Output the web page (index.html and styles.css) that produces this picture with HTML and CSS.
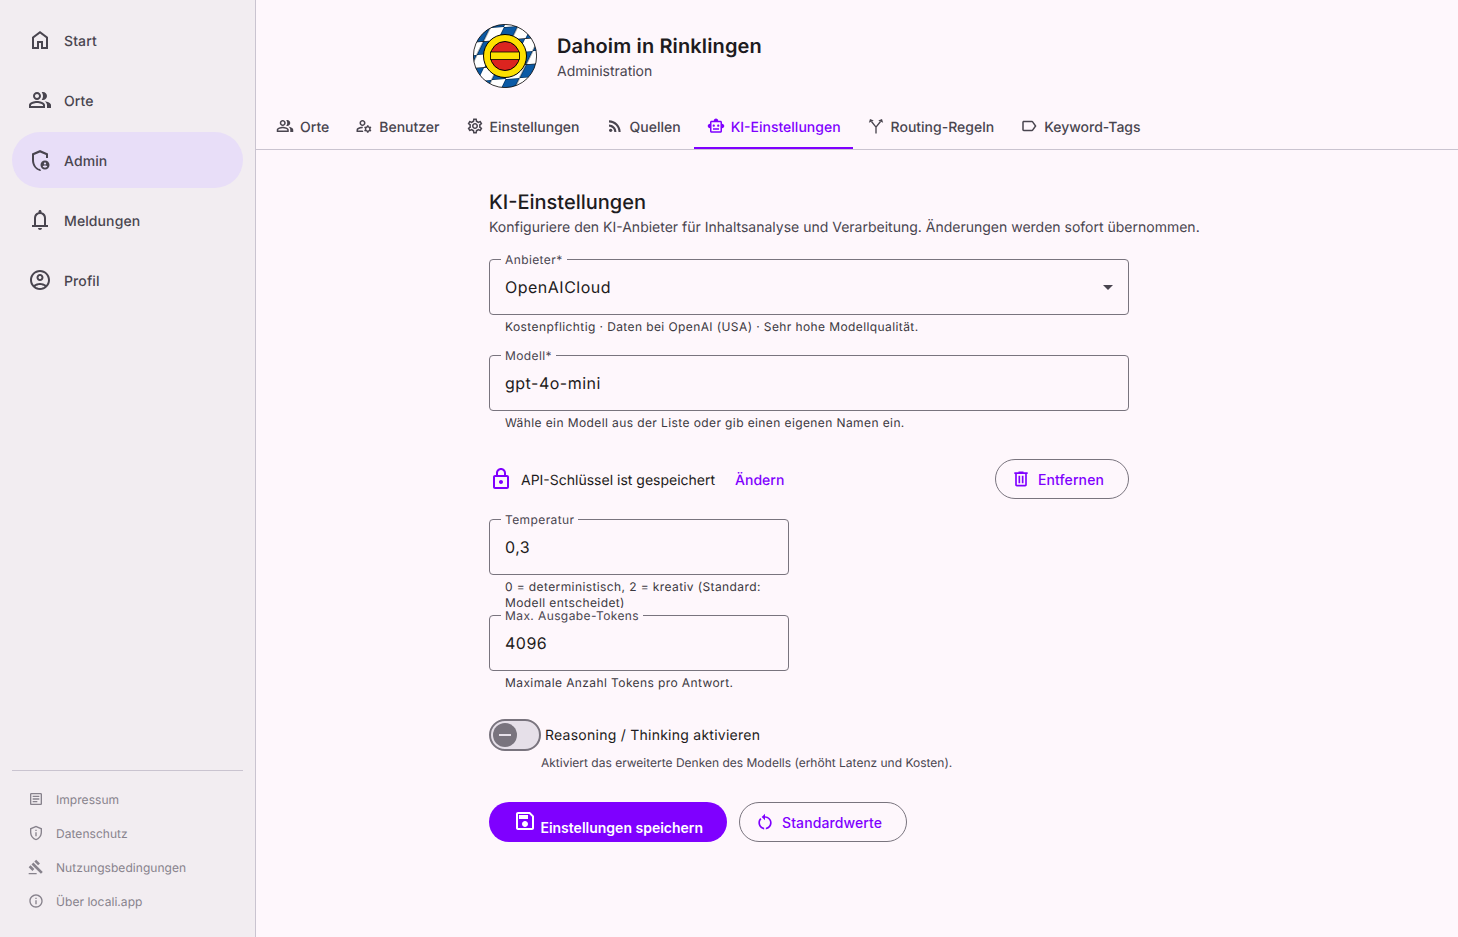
FILE: index.html
```html
<!DOCTYPE html>
<html lang="de">
<head>
    <meta charset="UTF-8">
    <meta name="viewport" content="width=device-width, initial-scale=1.0">
    <title>KI-Einstellungen</title>
    <link rel="stylesheet" href="styles.css">
</head>
<body>
    <aside class="sidebar">
        <nav class="nav">
            <a class="nav-item"><svg class="icon-24" viewBox="0 0 24 24"><path d="M6 19h3v-6h6v6h3v-9l-6-4.500L6 10v9zm-2 2V9l8-6 8 6v12h-7v-6h-2v6H4z"/></svg>Start</a>
            <a class="nav-item"><svg class="icon-24" viewBox="0 0 24 24"><path d="M16.670 13.130C18.040 14.060 19 15.320 19 17v3h4v-3c0-2.180-3.570-3.470-6.330-3.870zM15 12c2.210 0 4-1.790 4-4s-1.790-4-4-4c-.470 0-.910.100-1.330.240C14.500 5.270 15 6.580 15 8s-.500 2.730-1.330 3.760c.420.140.860.240 1.330.240zM9 12c2.210 0 4-1.790 4-4s-1.790-4-4-4-4 1.790-4 4 1.790 4 4 4zm0-6c1.100 0 2 .900 2 2s-.900 2-2 2-2-.900-2-2 .900-2 2-2zM9 13c-2.670 0-8 1.340-8 4v3h16v-3c0-2.660-5.330-4-8-4zm6 5H3v-.990C3.200 16.290 6.300 15 9 15s5.800 1.290 6 2v1z"/></svg>Orte</a>
            <a class="nav-item active"><svg class="icon-24" viewBox="0 0 24 24"><path d="M11 20.900C8 19.800 6 16 6 12V6.900l6-2.400 6 2.400V10h2V5.600L12 2 4 5.600V12c0 5.100 3.200 9.700 8 11 .4-.1.800-.3 1.200-.5-.5-.5-.9-1.100-1.200-1.800z"/><path fill-rule="evenodd" d="M17 12.500c-2.490 0-4.500 2.010-4.500 4.500s2.010 4.500 4.500 4.500 4.500-2.010 4.500-4.500-2.010-4.500-4.500-4.500zm0 1.880c.620 0 1.120.510 1.120 1.120s-.510 1.120-1.120 1.120-1.120-.510-1.120-1.120.500-1.120 1.120-1.120zm0 5.370c-.930 0-1.740-.460-2.240-1.170.050-.720 1.510-1.080 2.240-1.080s2.190.360 2.240 1.080c-.500.710-1.310 1.170-2.240 1.170z"/></svg>Admin</a>
            <a class="nav-item"><svg class="icon-24" viewBox="0 0 24 24"><path d="M4 19v-2h2v-7c0-2.770 1.500-5 4.500-5.700V3.500c0-.830.670-1.500 1.500-1.500s1.500.670 1.500 1.500v.800c3 .700 4.500 2.930 4.500 5.700v7h2v2H4zm4-2h8v-7c0-2.200-1.800-4-4-4s-4 1.800-4 4v7zm4 5c-1.100 0-2-.900-2-2h4c0 1.100-.900 2-2 2z"/></svg>Meldungen</a>
            <a class="nav-item"><svg class="icon-24" viewBox="0 0 24 24"><path d="M12 2C6.480 2 2 6.480 2 12s4.480 10 10 10 10-4.480 10-10S17.520 2 12 2zM7.350 18.500C8.660 17.560 10.260 17 12 17s3.340.560 4.650 1.500c-1.310.940-2.910 1.500-4.650 1.500s-3.340-.560-4.650-1.500zm10.790-1.380C16.450 15.800 14.320 15 12 15s-4.450.800-6.140 2.120C4.700 15.730 4 13.950 4 12c0-4.420 3.580-8 8-8s8 3.580 8 8c0 1.950-.700 3.730-1.860 5.120z"/><path d="M12 6c-1.930 0-3.500 1.570-3.500 3.500S10.070 13 12 13s3.500-1.570 3.500-3.500S13.930 6 12 6zm0 5c-.830 0-1.500-.670-1.500-1.500S11.170 8 12 8s1.500.670 1.500 1.500S12.830 11 12 11z"/></svg>Profil</a>
        </nav>
        <div class="legal">
            <a class="legal-item"><svg class="icon-16" viewBox="0 0 24 24"><path d="M19 5v14H5V5h14m0-2H5c-1.100 0-2 .900-2 2v14c0 1.100.900 2 2 2h14c1.100 0 2-.900 2-2V5c0-1.100-.900-2-2-2z"/><path d="M14 17H7v-2h7v2zm3-4H7v-2h10v2zm0-4H7V7h10v2z"/></svg>Impressum</a>
            <a class="legal-item"><svg class="icon-16" viewBox="0 0 24 24"><path d="M12 3.190l7 3.110V11c0 4.520-2.980 8.690-7 9.930-4.020-1.240-7-5.410-7-9.930V6.300l7-3.110M12 1L3 5v6c0 5.550 3.840 10.740 9 12 5.160-1.260 9-6.450 9-12V5l-9-4zm-1 6h2v2h-2V7zm0 4h2v6h-2v-6z"/></svg>Datenschutz</a>
            <a class="legal-item"><svg class="icon-16" viewBox="0 0 24 24"><path d="M1 21h12v2H1v-2zM5.240 8.070l2.830-2.830 14.140 14.140-2.830 2.830L5.240 8.070zM12.320 1l5.660 5.660-2.830 2.830-5.660-5.660L12.320 1zM3.830 9.480l5.660 5.660-2.830 2.830L1 12.310l2.830-2.830z"/></svg>Nutzungsbedingungen</a>
            <a class="legal-item"><svg class="icon-16" viewBox="0 0 24 24"><path d="M11 7h2v2h-2zm0 4h2v6h-2zm1-9C6.480 2 2 6.480 2 12s4.480 10 10 10 10-4.480 10-10S17.520 2 12 2zm0 18c-4.410 0-8-3.590-8-8s3.590-8 8-8 8 3.590 8 8-3.590 8-8 8z"/></svg>Über locali.app</a>
        </div>
    </aside>

    <main class="main">
        <header class="place-header">
            <svg class="logo" viewBox="0 0 64 64">
                <defs>
                    <pattern id="lozenges" width="28" height="26" patternUnits="userSpaceOnUse" patternTransform="translate(3 5) rotate(-4) skewX(-30)">
                        <rect width="28" height="26" fill="#fff"/>
                        <rect width="14" height="13" fill="#0b5aa5" stroke="#000" stroke-width=".6"/>
                        <rect x="14" y="13" width="14" height="13" fill="#0b5aa5" stroke="#000" stroke-width=".6"/>
                    </pattern>
                </defs>
                <circle cx="32" cy="32" r="31.600" fill="url(#lozenges)" stroke="#000" stroke-width=".8"/>
                <circle cx="32" cy="32" r="21.500" fill="#fde000" stroke="#000" stroke-width="1"/>
                <circle cx="32" cy="32" r="14.500" fill="#dc241f" stroke="#000" stroke-width="1"/>
                <rect x="17.500" y="28" width="29" height="7.500" fill="#fde000" stroke="#000" stroke-width=".8"/>
            </svg>
            <div>
                <h1 class="place-title">Dahoim in Rinklingen</h1>
                <div class="place-sub">Administration</div>
            </div>
        </header>

        <div class="tabs">
            <a class="tab"><svg class="icon-18" viewBox="0 0 24 24"><path d="M16.670 13.130C18.040 14.060 19 15.320 19 17v3h4v-3c0-2.180-3.570-3.470-6.330-3.870zM15 12c2.210 0 4-1.790 4-4s-1.790-4-4-4c-.470 0-.910.100-1.330.240C14.500 5.270 15 6.580 15 8s-.500 2.730-1.330 3.760c.420.140.860.240 1.330.240zM9 12c2.210 0 4-1.790 4-4s-1.790-4-4-4-4 1.790-4 4 1.790 4 4 4zm0-6c1.100 0 2 .900 2 2s-.900 2-2 2-2-.900-2-2 .900-2 2-2zM9 13c-2.670 0-8 1.340-8 4v3h16v-3c0-2.660-5.330-4-8-4zm6 5H3v-.990C3.200 16.290 6.300 15 9 15s5.800 1.290 6 2v1z"/></svg>Orte</a>
            <a class="tab"><svg class="icon-18" viewBox="0 0 24 24"><path d="M4 18v-.650c0-.340.160-.660.410-.810C6.100 15.530 8.030 15 10 15c.030 0 .050 0 .080.010.100-.700.300-1.370.590-1.980-.220-.020-.440-.030-.670-.030-2.420 0-4.680.670-6.610 1.820-.880.520-1.390 1.500-1.390 2.530V20h9.260c-.420-.600-.750-1.280-.970-2H4z"/><path d="M10 12c2.210 0 4-1.790 4-4s-1.790-4-4-4-4 1.790-4 4 1.790 4 4 4zm0-6c1.100 0 2 .900 2 2s-.900 2-2 2-2-.900-2-2 .900-2 2-2z"/><path d="M20.750 16c0-.220-.030-.420-.060-.630l1.140-1.010-1-1.730-1.450.490c-.320-.270-.680-.480-1.080-.630L18 11h-2l-.300 1.490c-.400.150-.760.360-1.080.630l-1.450-.490-1 1.730 1.140 1.010c-.030.210-.060.410-.060.630s.030.420.060.630l-1.140 1.010 1 1.730 1.450-.490c.320.270.680.480 1.080.630L16 21h2l.300-1.490c.400-.150.760-.360 1.080-.630l1.450.490 1-1.730-1.140-1.010c.030-.210.060-.410.060-.630zM17 18c-1.100 0-2-.900-2-2s.900-2 2-2 2 .900 2 2-.900 2-2 2z"/></svg>Benutzer</a>
            <a class="tab"><svg class="icon-18" viewBox="0 0 24 24"><path d="M19.430 12.980c.040-.320.070-.640.070-.980 0-.340-.030-.660-.070-.980l2.110-1.650c.190-.150.240-.420.120-.640l-2-3.460c-.090-.160-.260-.250-.440-.250-.060 0-.120.010-.170.030l-2.490 1c-.520-.400-1.080-.730-1.690-.980l-.380-2.650C14.460 2.180 14.250 2 14 2h-4c-.250 0-.460.180-.490.420l-.380 2.650c-.610.250-1.170.590-1.690.980l-2.490-1c-.060-.020-.120-.030-.180-.030-.170 0-.340.090-.430.250l-2 3.460c-.130.220-.070.490.120.640l2.110 1.650c-.040.320-.070.650-.070.980 0 .330.030.660.070.980l-2.110 1.650c-.190.150-.240.420-.120.640l2 3.460c.090.160.260.250.440.250.060 0 .120-.010.170-.030l2.490-1c.520.400 1.080.730 1.690.980l.380 2.650c.030.240.240.420.490.420h4c.250 0 .460-.180.490-.420l.380-2.650c.610-.250 1.170-.590 1.690-.980l2.490 1c.060.020.120.030.180.030.170 0 .340-.090.430-.250l2-3.460c.120-.220.070-.490-.120-.640l-2.110-1.650zm-1.980-1.710c.040.310.050.520.050.730 0 .210-.020.430-.050.730l-.140 1.130.890.700 1.080.840-.700 1.210-1.270-.510-1.040-.420-.900.680c-.430.320-.840.560-1.250.730l-1.060.430-.160 1.130-.200 1.350h-1.400l-.190-1.350-.160-1.130-1.060-.430c-.430-.180-.830-.410-1.230-.710l-.910-.700-1.060.430-1.270.510-.700-1.210 1.080-.840.890-.700-.140-1.130c-.030-.310-.050-.540-.050-.740s.020-.430.050-.730l.140-1.130-.890-.700-1.080-.840.700-1.210 1.270.510 1.040.420.900-.680c.430-.320.840-.560 1.250-.730l1.060-.430.160-1.130.200-1.350h1.390l.190 1.350.160 1.130 1.060.430c.430.180.830.410 1.230.710l.910.700 1.060-.430 1.270-.510.700 1.210-1.070.850-.890.700.140 1.130zM12 8c-2.210 0-4 1.790-4 4s1.790 4 4 4 4-1.790 4-4-1.790-4-4-4zm0 6c-1.100 0-2-.900-2-2s.900-2 2-2 2 .900 2 2-.900 2-2 2z"/></svg>Einstellungen</a>
            <a class="tab"><svg class="icon-18" viewBox="0 0 24 24"><circle cx="6.180" cy="17.820" r="2.180"/><path d="M4 4.440v2.830c7.030 0 12.730 5.700 12.730 12.730h2.830c0-8.590-6.970-15.560-15.560-15.560zm0 5.660v2.830c3.900 0 7.070 3.170 7.070 7.070h2.830c0-5.470-4.430-9.900-9.900-9.900z"/></svg>Quellen</a>
            <a class="tab active"><svg class="icon-18" viewBox="0 0 24 24"><path d="M20 9V7c0-1.100-.900-2-2-2h-3c0-1.660-1.340-3-3-3S9 3.340 9 5H6c-1.100 0-2 .900-2 2v2c-1.660 0-3 1.340-3 3s1.340 3 3 3v4c0 1.100.900 2 2 2h12c1.100 0 2-.900 2-2v-4c1.660 0 3-1.340 3-3s-1.340-3-3-3zm-2 10H6V7h12v12zm-9-6c-.830 0-1.500-.670-1.500-1.500S8.170 10 9 10s1.500.670 1.500 1.500S9.830 13 9 13zm7.500-1.500c0 .830-.670 1.500-1.500 1.500s-1.500-.670-1.500-1.500.670-1.500 1.500-1.500 1.500.670 1.500 1.500zM8 15h8v2H8v-2z"/></svg>KI-Einstellungen</a>
            <a class="tab"><svg class="icon-18" viewBox="0 0 24 24"><path fill="none" stroke="currentColor" stroke-width="1.800" d="M12 22v-8.500L6 6M12 13.500L18 6"/><polygon points="2.500,7.500 4,2.500 9,4.500"/><polygon points="21.500,7.500 20,2.500 15,4.500"/></svg>Routing-Regeln</a>
            <a class="tab"><svg class="icon-18" viewBox="0 0 24 24"><path d="M17.630 5.840C17.270 5.330 16.670 5 16 5L5 5.010C3.900 5.010 3 5.900 3 7v10c0 1.100.900 1.990 2 1.990L16 19c.670 0 1.270-.330 1.630-.840L22 12l-4.370-6.160zM16 17H5V7h11l3.550 5L16 17z"/></svg>Keyword-Tags</a>
        </div>

        <section class="content">
            <h2 class="section-title">KI-Einstellungen</h2>
            <p class="section-sub">Konfiguriere den KI-Anbieter für Inhaltsanalyse und Verarbeitung. Änderungen werden sofort übernommen.</p>

            <div class="field">
                <div class="field-box">
                    <span class="field-label">Anbieter*</span>
                    <span class="field-value">OpenAICloud</span>
                    <svg class="select-arrow" viewBox="0 0 24 24"><path d="M7 10l5 5 5-5z"/></svg>
                </div>
                <div class="hint">Kostenpflichtig · Daten bei OpenAI (USA) · Sehr hohe Modellqualität.</div>
            </div>

            <div class="field">
                <div class="field-box">
                    <span class="field-label">Modell*</span>
                    <span class="field-value">gpt-4o-mini</span>
                </div>
                <div class="hint">Wähle ein Modell aus der Liste oder gib einen eigenen Namen ein.</div>
            </div>

            <div class="api-row">
                <svg class="lock-icon" viewBox="0 0 24 24"><path d="M18 8h-1V6c0-2.760-2.240-5-5-5S7 3.240 7 6v2H6c-1.100 0-2 .900-2 2v10c0 1.100.900 2 2 2h12c1.100 0 2-.900 2-2V10c0-1.100-.900-2-2-2zM9 6c0-1.660 1.340-3 3-3s3 1.340 3 3v2H9V6zm9 14H6V10h12v10zm-6-3c1.100 0 2-.900 2-2s-.900-2-2-2-2 .900-2 2 .900 2 2 2z"/></svg>
                <span class="api-text">API-Schlüssel ist gespeichert</span>
                <a class="api-change">Ändern</a>
                <button class="btn-outline btn-remove" type="button"><svg class="icon-20" viewBox="0 0 24 24"><path d="M7 21c-.550 0-1.020-.200-1.410-.590S5 19.550 5 19V6H4V4h5V3h6v1h5v2h-1v13c0 .550-.200 1.020-.590 1.410S17.550 21 17 21H7zM17 6H7v13h10V6zM9 17h2V8H9v9zm4 0h2V8h-2v9z"/></svg>Entfernen</button>
            </div>

            <div class="field narrow">
                <div class="field-box">
                    <span class="field-label">Temperatur</span>
                    <span class="field-value">0,3</span>
                </div>
                <div class="hint">0 = deterministisch, 2 = kreativ (Standard: Modell entscheidet)</div>
            </div>

            <div class="field narrow">
                <div class="field-box">
                    <span class="field-label">Max. Ausgabe-Tokens</span>
                    <span class="field-value">4096</span>
                </div>
                <div class="hint">Maximale Anzahl Tokens pro Antwort.</div>
            </div>

            <div class="switch-row">
                <span class="switch"><span class="switch-thumb"></span></span>
                <span class="switch-label">Reasoning / Thinking aktivieren</span>
            </div>
            <div class="switch-hint">Aktiviert das erweiterte Denken des Modells (erhöht Latenz und Kosten).</div>

            <div class="actions">
                <button class="btn-save" type="button"><svg class="icon-24" viewBox="0 0 24 24"><path d="M17 3H5c-1.110 0-2 .900-2 2v14c0 1.100.890 2 2 2h14c1.100 0 2-.900 2-2V7l-4-4zm2 16H5V5h11.170L19 7.830V19zm-7-7c-1.660 0-3 1.340-3 3s1.340 3 3 3 3-1.340 3-3-1.340-3-3-3zM6 6h9v4H6z"/></svg> Einstellungen speichern</button>
                <button class="btn-outline btn-reset" type="button"><svg class="icon-20" viewBox="0 0 24 24"><path d="M12 5V2L8 6l4 4V7c3.310 0 6 2.690 6 6 0 2.970-2.170 5.430-5 5.910v2.020c3.950-.490 7-3.850 7-7.930 0-4.420-3.580-8-8-8zm-6 8c0-1.650.670-3.150 1.760-4.240L6.340 7.340C4.900 8.790 4 10.790 4 13c0 4.080 3.050 7.440 7 7.930v-2.020C8.170 18.430 6 15.970 6 13z"/></svg>Standardwerte</button>
            </div>
        </section>
    </main>
</body>
</html>
```

FILE: styles.css
```css
* {
    box-sizing: border-box;
}

body {
    font-family: Inter, "Noto Sans", sans-serif;
    text-rendering: geometricPrecision;
    background-color: #fef7fc;
    color: #1d1b20;
    margin: 0;
    height: 100vh;
    display: flex;
    overflow: hidden;
}

svg {
    fill: currentColor;
    flex-shrink: 0;
}

.icon-24 {
    width: 24px;
    height: 24px;
}

.icon-20 {
    width: 20px;
    height: 20px;
}

.icon-18 {
    width: 18px;
    height: 18px;
}

.icon-16 {
    width: 16px;
    height: 16px;
}

/* sidebar */
.sidebar {
    width: 256px;
    flex-shrink: 0;
    background-color: #f2edf1;
    border-right: 1px solid #cac4d0;
    padding: 12px 12px 19px;
    display: flex;
    flex-direction: column;
    justify-content: space-between;
}

.nav {
    display: flex;
    flex-direction: column;
    gap: 4px;
}

.nav-item {
    height: 56px;
    padding: 2px 16px 0;
    border-radius: 28px;
    display: flex;
    align-items: center;
    gap: 12px;
    font-size: 14px;
    font-weight: 500;
    letter-spacing: 0.1px;
    color: #49454f;
}

.nav-item svg {
    margin-top: -2px;
}

.nav-item.active {
    background-color: #e8def8;
}

.legal {
    height: 148px;
    border-top: 1px solid #cac4d0;
    padding-top: 11px;
}

.legal-item {
    height: 34px;
    padding-left: 16px;
    display: flex;
    align-items: center;
    gap: 12px;
    font-size: 12px;
    letter-spacing: 0.05px;
    color: #87828c;
}

/* main column */
.main {
    flex: 1;
    min-width: 0;
}

.place-header {
    width: 768px;
    height: 105px;
    margin: 0 auto;
    padding-top: 24px;
    display: flex;
    align-items: flex-start;
    gap: 20px;
}

.logo {
    width: 64px;
    height: 64px;
}

.place-title {
    margin: 8px 0 0;
    font-size: 20px;
    line-height: 28px;
    font-weight: 600;
    letter-spacing: 0.13px;
}

.place-sub {
    margin-top: 1px;
    font-size: 14px;
    line-height: 22px;
    color: #49454f;
}

.tabs {
    height: 45px;
    padding-left: 7.5px;
    border-bottom: 1px solid #cac4d0;
    display: flex;
    gap: 1px;
}

.tab {
    height: 44px;
    padding: 2px 12.500px 0;
    display: flex;
    align-items: center;
    gap: 6px;
    font-size: 14px;
    font-weight: 500;
    color: #49454f;
    border-bottom: 2px solid transparent;
}

.tab svg {
    margin-top: -2px;
}

.tab.active {
    color: #7f00ff;
    border-bottom-color: #7f00ff;
}

.content {
    width: 768px;
    margin: 0 auto;
    padding: 38px 16px 0;
}

.section-title {
    margin: 0;
    font-size: 20px;
    line-height: 28px;
    font-weight: 500;
}

.section-sub {
    margin: 2px 0 21px;
    font-size: 14px;
    line-height: 20px;
    color: #49454f;
}

/* form fields */
.field {
    width: 640px;
    height: 96px;
}

.field.narrow {
    width: 300px;
}

.field-box {
    position: relative;
    height: 56px;
    padding: 0 15px;
    border: 1px solid #79747e;
    border-radius: 4px;
    display: flex;
    align-items: center;
    justify-content: space-between;
}

.field-label {
    position: absolute;
    top: -8px;
    left: 11px;
    padding: 0 4px;
    background-color: #fef7fc;
    font-size: 12px;
    line-height: 16px;
    letter-spacing: 0.4px;
    color: #49454f;
}

.field-value {
    font-size: 16px;
    letter-spacing: 0.5px;
}

.select-arrow {
    width: 24px;
    height: 24px;
    margin-right: -7px;
    color: #49454f;
}

.hint {
    margin-top: 4px;
    padding: 0 16px;
    font-size: 12px;
    line-height: 16px;
    letter-spacing: 0.4px;
    color: #3b3840;
}

.api-row {
    width: 640px;
    height: 40px;
    margin: 8px 0 20px;
    display: flex;
    align-items: center;
    font-size: 14px;
}

.lock-icon {
    width: 24px;
    height: 24px;
    color: #7f00ff;
}

.api-text {
    margin-left: 8px;
    padding-top: 2px;
}

.api-change {
    margin-left: 20px;
    padding-top: 2px;
    color: #7f00ff;
    font-weight: 500;
}

.btn-outline {
    height: 40px;
    padding: 0 0 0 15px;
    border: 1px solid #79747e;
    border-radius: 20px;
    background: none;
    display: flex;
    align-items: center;
    gap: 7px;
    font-family: inherit;
    font-size: 14px;
    font-weight: 500;
    letter-spacing: 0.1px;
    color: #7f00ff;
}

.btn-remove {
    margin-left: auto;
    width: 134px;
}

.switch-row {
    margin-top: 8px;
    display: flex;
    align-items: center;
    gap: 4px;
}

.switch {
    width: 52px;
    height: 32px;
    border: 2px solid #79747e;
    border-radius: 16px;
    background-color: #e6e0e9;
    display: flex;
    align-items: center;
    padding-left: 2px;
}

.switch-thumb {
    position: relative;
    width: 24px;
    height: 24px;
    border-radius: 50%;
    background-color: #79747e;
}

.switch-thumb::after {
    content: "";
    position: absolute;
    top: 11px;
    left: 6px;
    width: 12px;
    height: 2px;
    background-color: #e6e0e9;
}

.switch-label {
    font-size: 14px;
    letter-spacing: 0.25px;
}

.switch-hint {
    margin: 4px 0 31px 52px;
    font-size: 12px;
    line-height: 16px;
    color: #49454f;
}

.actions {
    display: flex;
    gap: 12px;
}

.btn-save {
    width: 238px;
    height: 40px;
    padding: 1px 0 0;
    border: none;
    border-radius: 20px;
    background-color: #7f00ff;
    color: #fff;
    font-family: inherit;
    font-size: 14px;
    font-weight: 600;
    text-align: center;
    white-space: nowrap;
    display: block;
}

.btn-save svg {
    display: inline-block;
}

.btn-reset {
    width: 168px;
}
```
